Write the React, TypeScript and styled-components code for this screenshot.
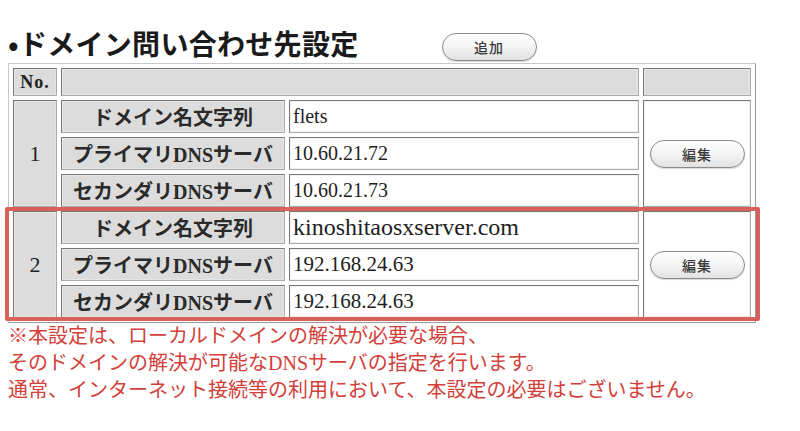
import styled, { createGlobalStyle } from 'styled-components'

const GlobalStyle = createGlobalStyle`
  body {
    margin: 0;
    background: #fff;
    font-family: "Liberation Serif", "Noto Sans CJK JP", serif;
    color: #222;
  }
`

const Page = styled.div`
  padding: 26px 8px 0 8px;
`

const HeaderRow = styled.div`
  display: flex;
  align-items: center;
  height: 34px;
`

const Title = styled.h1`
  margin: 0;
  font-family: "Noto Sans CJK JP", sans-serif;
  font-size: 28px;
  font-weight: 700;
  line-height: 34px;
  color: #1a1a1a;
  letter-spacing: 0.3px;
`

const PillButton = styled.button`
  width: 95px;
  height: 28px;
  border: 1px solid #8a8a8a;
  border-radius: 14px;
  background: linear-gradient(#ffffff 0%, #f4f4f4 50%, #e2e2e2 100%);
  box-shadow: inset 0 1px 1px rgba(255, 255, 255, 0.9), 0 1px 1px rgba(0, 0, 0, 0.15);
  font-family: "Noto Sans CJK JP", sans-serif;
  font-size: 14px;
  font-weight: 500;
  color: #3a3a3a;
  letter-spacing: 1px;
  padding: 0;
  cursor: pointer;
`

const AddButton = styled(PillButton)`
  margin-left: 83px;
  margin-top: 8px;
`

const TableWrap = styled.div`
  position: relative;
  width: 748px;
  margin-top: 3px;
`

const Table = styled.table`
  width: 748px;
  table-layout: fixed;
  border-collapse: separate;
  border-spacing: 4px;
  border: 1px solid;
  border-color: #c8c8c8 #9a9a9a #9a9a9a #c8c8c8;
  box-sizing: border-box;
`

const Cell = styled.td<{ $gray?: boolean; $h?: number }>`
  box-sizing: border-box;
  height: ${p => p.$h ?? 33}px;
  padding: 0;
  border: 1px solid;
  border-color: #777 #aaa #aaa #777;
  box-shadow: inset 0 0 0 1px ${p => (p.$gray ? '#e6e6e6' : '#f2f2f2')};
  background: ${p => (p.$gray ? '#dcdcdc' : '#fff')};
`

const NoCell = styled(Cell)`
  text-align: center;
  font-family: "Liberation Serif", serif;
  font-weight: 700;
  font-size: 18px;
  letter-spacing: 1px;
`

const NumCell = styled(Cell)`
  text-align: center;
  vertical-align: middle;
  font-family: "Liberation Serif", serif;
  font-size: 22px;
`

const LabelCell = styled(Cell)`
  text-align: center;
  font-weight: 700;
  font-size: 20px;
  font-family: "Liberation Serif", "Noto Sans CJK JP", serif;
  color: #2a2a2a;
`

const ValueCell = styled(Cell)<{ $size: number }>`
  padding-left: 3px;
  font-size: ${p => p.$size}px;
  font-family: "Liberation Serif", serif;
  color: #1e1e1e;
  white-space: nowrap;
`

const EditCell = styled(Cell)`
  text-align: center;
  vertical-align: middle;
`

const Highlight = styled.div`
  position: absolute;
  left: -3px;
  top: 144px;
  width: 755px;
  height: 114px;
  box-sizing: border-box;
  border: 4px solid #d7625c;
  border-radius: 2px;
  pointer-events: none;
`

const Notes = styled.div`
  margin-top: 0;
  font-family: "Liberation Serif", "Noto Sans CJK JP", serif;
  font-size: 20px;
  line-height: 27px;
  color: #d2403a;
`

type Entry = {
  no: number
  domain: string
  primary: string
  secondary: string
  domainSize: number
  ipSize: number
}

const entries: Entry[] = [
  { no: 1, domain: 'flets', primary: '10.60.21.72', secondary: '10.60.21.73', domainSize: 20, ipSize: 20 },
  { no: 2, domain: 'kinoshitaosxserver.com', primary: '192.168.24.63', secondary: '192.168.24.63', domainSize: 24, ipSize: 21 },
]

function App() {
  return (
    <>
      <GlobalStyle />
      <Page>
        <HeaderRow>
          <Title>•ドメイン問い合わせ先設定</Title>
          <AddButton>追加</AddButton>
        </HeaderRow>

        <TableWrap>
          <Table>
            <colgroup>
              <col style={{ width: 44 }} />
              <col style={{ width: 224 }} />
              <col style={{ width: 350 }} />
              <col style={{ width: 108 }} />
            </colgroup>
            <tbody>
              <tr>
                <NoCell $gray $h={28}>No.</NoCell>
                <Cell $gray $h={28} colSpan={2} />
                <Cell $gray $h={28} />
              </tr>
            </tbody>
            {entries.map(e => (
              <tbody key={e.no}>
                <tr>
                  <NumCell $gray rowSpan={3}>{e.no}</NumCell>
                  <LabelCell $gray>ドメイン名文字列</LabelCell>
                  <ValueCell $size={e.domainSize}>{e.domain}</ValueCell>
                  <EditCell rowSpan={3}>
                    <PillButton>編集</PillButton>
                  </EditCell>
                </tr>
                <tr>
                  <LabelCell $gray>プライマリDNSサーバ</LabelCell>
                  <ValueCell $size={e.ipSize}>{e.primary}</ValueCell>
                </tr>
                <tr>
                  <LabelCell $gray>セカンダリDNSサーバ</LabelCell>
                  <ValueCell $size={e.ipSize}>{e.secondary}</ValueCell>
                </tr>
              </tbody>
            ))}
          </Table>
          <Highlight />
        </TableWrap>

        <Notes>
          <div>※本設定は、ローカルドメインの解決が必要な場合、</div>
          <div>そのドメインの解決が可能なDNSサーバの指定を行います。</div>
          <div>通常、インターネット接続等の利用において、本設定の必要はございません。</div>
        </Notes>
      </Page>
    </>
  )
}

export default App
